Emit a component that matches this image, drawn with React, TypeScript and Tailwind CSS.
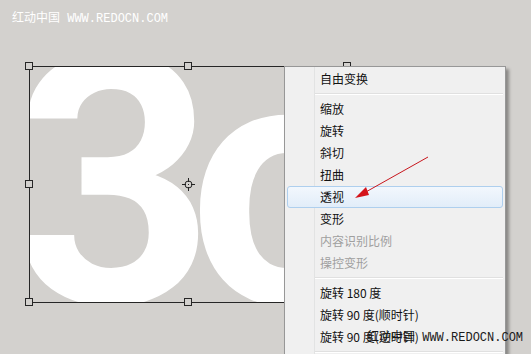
import React from "react";

const handles = [
  [29, 66],
  [188, 66],
  [347, 66],
  [29, 184],
  [29, 302],
  [188, 302],
];

type Item = { label: string; disabled?: boolean; active?: boolean } | "sep";

const items: Item[] = [
  { label: "自由变换" },
  "sep",
  { label: "缩放" },
  { label: "旋转" },
  { label: "斜切" },
  { label: "扭曲" },
  { label: "透视", active: true },
  { label: "变形" },
  { label: "内容识别比例", disabled: true },
  { label: "操控变形", disabled: true },
  "sep",
  { label: "旋转 180 度" },
  { label: "旋转 90 度(顺时针)" },
  { label: "旋转 90 度(逆时针)" },
  "sep",
];

function Watermark({ className }: { className: string }) {
  return (
    <div
      className={
        "absolute whitespace-pre text-[12px] leading-none " + className
      }
    >
      <span className="font-['Noto_Sans_CJK_SC',sans-serif]">红动中国</span>
      <span className="font-['Liberation_Mono',monospace]"> WWW.REDOCN.COM</span>
    </div>
  );
}

function Canvas() {
  return (
    <div className="absolute left-0 top-0 w-[531px] h-[354px]">
      {/* big text layer */}
      <div className="absolute left-[29px] top-[66px] w-[320px] h-[237px] overflow-hidden">
        <div className="absolute left-[-15px] top-[-58px] text-white font-['Roboto',sans-serif] font-bold text-[350px] leading-none tracking-[-26px] whitespace-nowrap">
          3o
        </div>
      </div>
      {/* bounding box */}
      <div className="absolute left-[29px] top-[66px] w-[319px] h-[237px] border border-[#262626]" />
      {handles.map(([x, y], i) => (
        <div
          key={i}
          className="absolute w-[8px] h-[8px] border border-[#262626] bg-[#d3d1ce]"
          style={{ left: x - 4, top: y - 4 }}
        />
      ))}
      {/* reference point */}
      <svg
        className="absolute left-[180px] top-[176px]"
        width="17"
        height="17"
        viewBox="0 0 17 17"
      >
        <circle cx="8.5" cy="8.5" r="3.5" fill="none" stroke="#222" />
        <path d="M8.5 2v4M8.5 11v4M2 8.5h4M11 8.5h4" stroke="#222" />
        <rect x="8" y="8" width="1" height="1" fill="#222" />
      </svg>
    </div>
  );
}

function ContextMenu() {
  return (
    <div className="absolute left-[284px] top-[66px] w-[222px] h-[300px] bg-[#f0f0f0] border border-[#979797] shadow-[3px_3px_3px_rgba(0,0,0,0.35)] pt-[1px] font-['Noto_Sans_CJK_SC',sans-serif] text-[12px]">
      <div className="absolute left-[29px] top-0 bottom-0 w-[2px] border-l border-[#e2e3e3] border-r-white" />
      <div className="relative flex flex-col">
        {items.map((it, i) =>
          it === "sep" ? (
            <div key={i} className="h-[8px] flex flex-col justify-center pl-[30px] pr-[2px]">
              <div className="h-px bg-[#e0e0e0]" />
              <div className="h-px bg-white" />
            </div>
          ) : (
            <div key={i} className="h-[22px] px-[2px]">
              <div
                className={
                  "h-full flex items-center pl-[32px] rounded-[3px] border " +
                  (it.active
                    ? "border-[#aecfee] bg-gradient-to-b from-[#f2f7fd] to-[#e2edf9]"
                    : "border-transparent")
                }
              >
                <span
                  className={
                    "leading-none " +
                    (it.disabled ? "text-[#9f9f9f]" : "text-[#111]")
                  }
                >
                  {it.label}
                </span>
              </div>
            </div>
          )
        )}
      </div>
    </div>
  );
}

function Arrow() {
  return (
    <svg className="absolute left-0 top-0" width="531" height="354">
      <line x1="428" y1="157" x2="364" y2="193" stroke="#c8161d" strokeWidth="1" />
      <polygon points="355,198 366,187 369,195" fill="#d4141b" />
    </svg>
  );
}

export default function App() {
  return (
    <div className="relative w-[531px] h-[354px] overflow-hidden bg-[#d3d1ce]">
      <Watermark className="left-[12px] top-[11px] text-white" />
      <Canvas />
      <ContextMenu />
      <Arrow />
      <Watermark className="left-[367px] top-[330px] text-[#1a1a1a]" />
    </div>
  );
}
